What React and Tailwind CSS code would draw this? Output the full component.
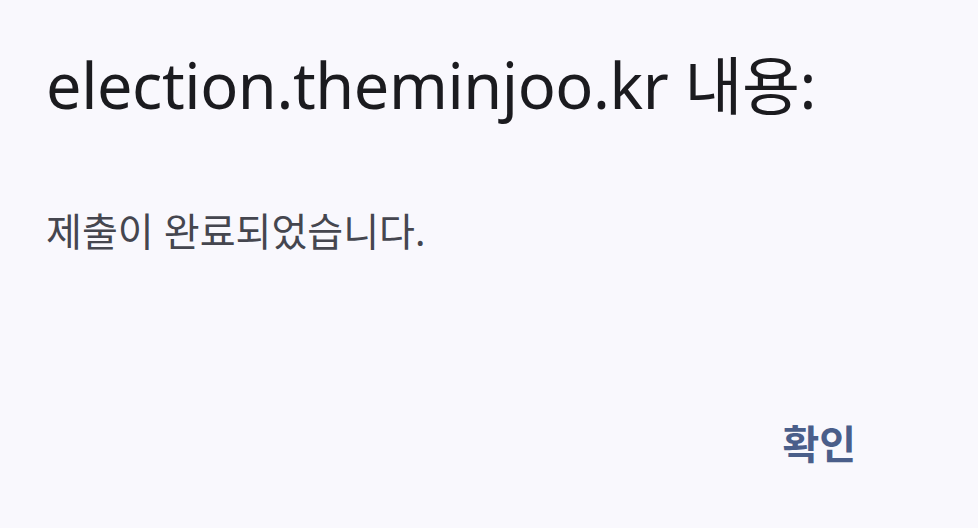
const App = () => {
  return (
    <div
      className="w-[978px] h-[528px] bg-[#f9f8fd] flex flex-col pl-[46px] pr-[122px] pt-[41px]"
      style={{ fontFamily: '"Noto Sans", "Noto Sans CJK KR", sans-serif' }}
    >
      <h1 className="text-[63px] leading-[88px] text-[#1b1b1f] tracking-[-0.4px] whitespace-nowrap">
        election.theminjoo.kr 내용:
      </h1>
      <p className="mt-[77px] text-[39px] leading-[50px] text-[#45464f]">
        제출이 완료되었습니다.
      </p>
      <div className="mt-auto mb-[59px] flex justify-end">
        <button className="text-[40px] leading-[50px] font-bold text-[#4a5e8a]">
          확인
        </button>
      </div>
    </div>
  );
};

export default App;
